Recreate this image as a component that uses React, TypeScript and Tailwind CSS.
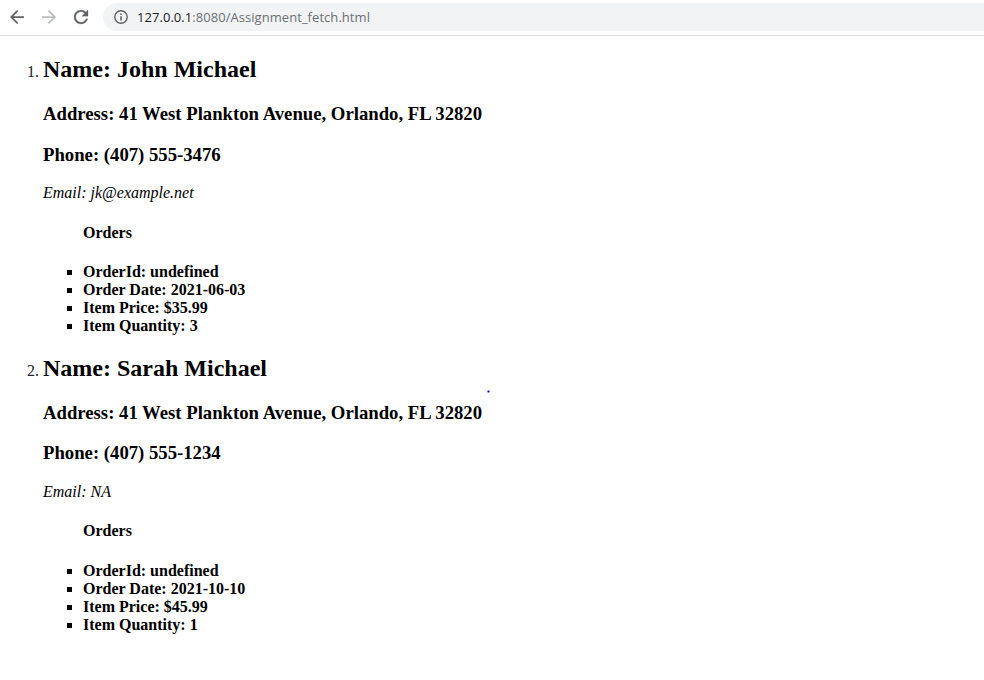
import React from "react";

const people = [
  { name: "John Michael", phone: "(407) 555-3476", email: "jk@example.net", date: "2021-06-03", price: "$35.99", qty: 3, phoneGap: "mt-[19px]", emailGap: "mt-[18px]", ordersGap: "mt-[22px]", listGap: "mt-[21px]" },
  { name: "Sarah Michael", phone: "(407) 555-1234", email: "NA", date: "2021-10-10", price: "$45.99", qty: 1, phoneGap: "mt-[18px]", emailGap: "mt-[19px]", ordersGap: "mt-[21px]", listGap: "mt-[22px]" },
];

function Toolbar() {
  return (
    <header className="flex h-9 items-center border-b border-[#dcdcdc] pb-[1px]">
      <svg className="ml-2 h-[18px] w-[18px]" viewBox="1.7 1.7 20.57 20.57" fill="#5f6368">
        <path d="M20 11H7.83l5.59-5.59L12 4l-8 8 8 8 1.41-1.41L7.83 13H20v-2z" />
      </svg>
      <svg className="ml-[14px] h-[18px] w-[18px]" viewBox="1.7 1.7 20.57 20.57" fill="#babcbe">
        <path d="M12 4l-1.41 1.41L16.17 11H4v2h12.17l-5.58 5.59L12 20l8-8z" />
      </svg>
      <svg className="ml-[14px] h-[18px] w-[18px]" viewBox="1.7 1.7 20.57 20.57" fill="#5f6368" stroke="#5f6368" strokeWidth="0.3">
        <path d="M17.65 6.35C16.2 4.9 14.21 4 12 4c-4.42 0-7.99 3.58-7.99 8s3.57 8 7.99 8c3.73 0 6.84-2.55 7.73-6h-2.08c-.82 2.33-3.04 4-5.65 4-3.31 0-6-2.69-6-6s2.69-6 6-6c1.66 0 3.14.69 4.22 1.78L13 11h7V4l-2.35 2.35z" />
      </svg>
      <div className="ml-[13px] flex h-7 flex-1 items-center rounded-l-full bg-[#f1f3f4] pl-[11px]">
        <svg className="h-[14px] w-[14px]" viewBox="0 0 14 14" fill="none" stroke="#5f6368" strokeWidth="1.4">
          <circle cx="7" cy="7" r="6.2" />
          <path d="M7 6.2V10.4M7 3.5V5" strokeWidth="1.6" />
        </svg>
        <span className="ml-[9px] whitespace-nowrap font-['Open_Sans',sans-serif] text-[13px] leading-4 tracking-[0.05px] text-[#6b6f73]">
          <span className="text-[#202124]">127.0.0.1</span>:8080/Assignment_fetch.html
        </span>
      </div>
    </header>
  );
}

export default function App() {
  return (
    <div className="relative h-[680px] overflow-hidden bg-white font-['Liberation_Serif',serif] text-black">
      <Toolbar />
      <ol className="pt-[19px]">
        {people.map((p, i) => (
          <li key={p.name} className="mb-[19px] flex">
            <span className="w-[43px] pr-1 pt-2 text-right text-[16px] leading-[18px] text-[#222]">{i + 1}.</span>
            <div>
              <h2 className="text-[24px] font-bold leading-[28px]">Name: {p.name}</h2>
              <h3 className="mt-[20px] text-[18.72px] font-bold leading-[22px]">Address: 41 West Plankton Avenue, Orlando, FL 32820</h3>
              <h3 className={`${p.phoneGap} text-[18.72px] font-bold leading-[22px]`}>Phone: {p.phone}</h3>
              <p className={`${p.emailGap} text-[16px] italic leading-[18px]`}>Email: {p.email}</p>
              <div className="pl-10 text-[16px] font-bold leading-[18px]">
                <h4 className={p.ordersGap}>Orders</h4>
                <ul className={p.listGap}>
                  {["OrderId: undefined", "Order Date: " + p.date, "Item Price: " + p.price, "Item Quantity: " + p.qty].map((t) => (
                    <li key={t} className="-ml-4 flex items-center">
                      <span className="mr-[11px] h-[5px] w-[5px] bg-black" />
                      {t}
                    </li>
                  ))}
                </ul>
              </div>
            </div>
          </li>
        ))}
      </ol>
      {/* stray pen mark over the page */}
      <svg className="absolute left-[487px] top-[390px] h-[3px] w-[3px]" viewBox="0 0 3 3">
        <path d="M0 0H3V3H0Z" fill="#c8c8fa" />
        <path d="M1 0H2V3H1ZM0 1H3V2H0Z" fill="#8080ee" />
        <path d="M1 1H2V2H1Z" fill="#0000d0" />
      </svg>
    </div>
  );
}
